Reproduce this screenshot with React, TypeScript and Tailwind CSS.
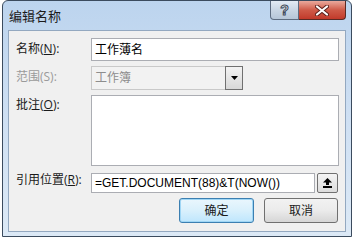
import React from 'react';

// Win7 风格的“编辑名称”对话框
const UploadIcon = () => (
  <svg width="9" height="10" viewBox="0 0 9 10">
    <polygon points="4.5,0 9,4.5 0,4.5" fill="#000" />
    <rect x="3" y="4" width="3" height="3" fill="#000" />
    <rect x="0" y="8" width="9" height="2" fill="#000" />
  </svg>
);

const DownArrow = () => (
  <svg width="7" height="5" viewBox="0 0 7 5">
    <polygon points="0,0 7,0 3.5,4" fill="#000" />
  </svg>
);

const CloseGlyph = () => (
  <svg width="14" height="11" viewBox="0 0 14 11">
    <path d="M2,1.5 L12,9.5 M12,1.5 L2,9.5" stroke="#5a1f1a" strokeWidth="4" strokeLinecap="round" />
    <path d="M2,1.5 L12,9.5 M12,1.5 L2,9.5" stroke="#fff" strokeWidth="2.2" strokeLinecap="round" />
  </svg>
);

export default function App() {
  return (
    <div className="w-[353px] h-[240px] bg-white font-['Open_Sans','Noto_Sans_CJK_SC',sans-serif]">
      <div className="ml-[2px] w-[350px] h-[237px] flex flex-col border border-[#3b4b5e] rounded-tl-[6px] rounded-tr-[6px] bg-gradient-to-b from-[#bcd4ee] via-[#cfe0f3] to-[#dce9f6]">
        {/* 标题栏 */}
        <div className="h-[29px] flex items-start">
          <div className="pl-[6px] pt-[8px] text-[13px] leading-[14px] text-[#1b1b1b]">编辑名称</div>
          <div className="ml-auto mr-[5px] flex">
            <div className="w-[29px] h-[19px] flex items-center justify-center border border-t-0 border-[#5d6c80] rounded-bl-[4px] bg-gradient-to-b from-[#e3ebf4] via-[#c9d6e4] to-[#b6c6d8] text-[14px] leading-none font-bold text-white [-webkit-text-stroke:1px_#3d4a5a] font-['Liberation_Sans',sans-serif]">?</div>
            <div className="w-[47px] h-[19px] flex items-center justify-center border border-t-0 border-l-0 border-[#5a2a24] rounded-br-[4px] bg-gradient-to-b from-[#e9a99d] via-[#cf5a48] to-[#c2392a]">
              <CloseGlyph />
            </div>
          </div>
        </div>

        {/* 客户区 */}
        <div className="mx-[5px] h-[202px] border border-[#93a8c0] bg-[#f0f0f0] px-[6px] pt-[7px] flex flex-col text-[12px] text-[#1a1a1a]">
          <div className="flex items-center h-[23px]">
            <div className="w-[76px] pl-[1px] -mt-[2px]">名称(<span className="underline">N</span>):</div>
            <div className="flex-1 h-[23px] bg-white border border-[#abadb3] flex items-center px-[3px] text-[12px] text-black">工作薄名</div>
          </div>

          <div className="flex items-center h-[24px] mt-[5px]">
            <div className="w-[76px] pl-[1px] -mt-[2px] text-[#9a9a9a]">范围(S):</div>
            <div className="w-[152px] h-[24px] border border-[#c9c9c9] bg-[#f2f2f2] flex items-center">
              <div className="flex-1 px-[3px] text-[12px] text-[#8d8d8d]">工作簿</div>
              <div className="w-[18px] h-[24px] -mr-[1px] border border-[#707070] bg-gradient-to-b from-[#f3f3f3] to-[#d8d8d8] flex items-center justify-center">
                <DownArrow />
              </div>
            </div>
          </div>

          <div className="flex items-start h-[71px] mt-[5px]">
            <div className="w-[76px] pl-[1px] pt-[1px]">批注(<span className="underline">O</span>):</div>
            <div className="flex-1 h-[71px] bg-white border border-[#abadb3]"></div>
          </div>

          <div className="flex items-center h-[20px] mt-[7px]">
            <div className="w-[76px] pl-[1px] -mt-[6px]">引用位置(<span className="underline">R</span>):</div>
            <div className="w-[224px] h-[20px] bg-white border border-[#abadb3] flex items-center px-[3px] text-[12px] text-black whitespace-nowrap overflow-hidden font-['Liberation_Sans','Noto_Sans_CJK_SC',sans-serif]">=GET.DOCUMENT(88)&amp;T(NOW())</div>
            <div className="ml-[2px] w-[21px] h-[20px] border border-[#707070] rounded-[2px] bg-gradient-to-b from-[#f4f4f4] to-[#dcdcdc] flex items-center justify-center">
              <UploadIcon />
            </div>
          </div>

          <div className="flex justify-end gap-[10px] mt-[5px] pr-[1px]">
            <div className="w-[75px] h-[25px] rounded-[3px] border border-[#3c7fb1] shadow-[inset_0_0_0_1px_#9fd6f5] bg-gradient-to-b from-[#eaf6fd] via-[#d9f0fc] to-[#bee6fd] flex items-center justify-center text-[12px]">确定</div>
            <div className="w-[74px] h-[25px] rounded-[3px] border border-[#707070] bg-gradient-to-b from-[#f2f2f2] via-[#ebebeb] to-[#d6d6d6] flex items-center justify-center text-[12px]">取消</div>
          </div>
        </div>
      </div>
    </div>
  );
}
